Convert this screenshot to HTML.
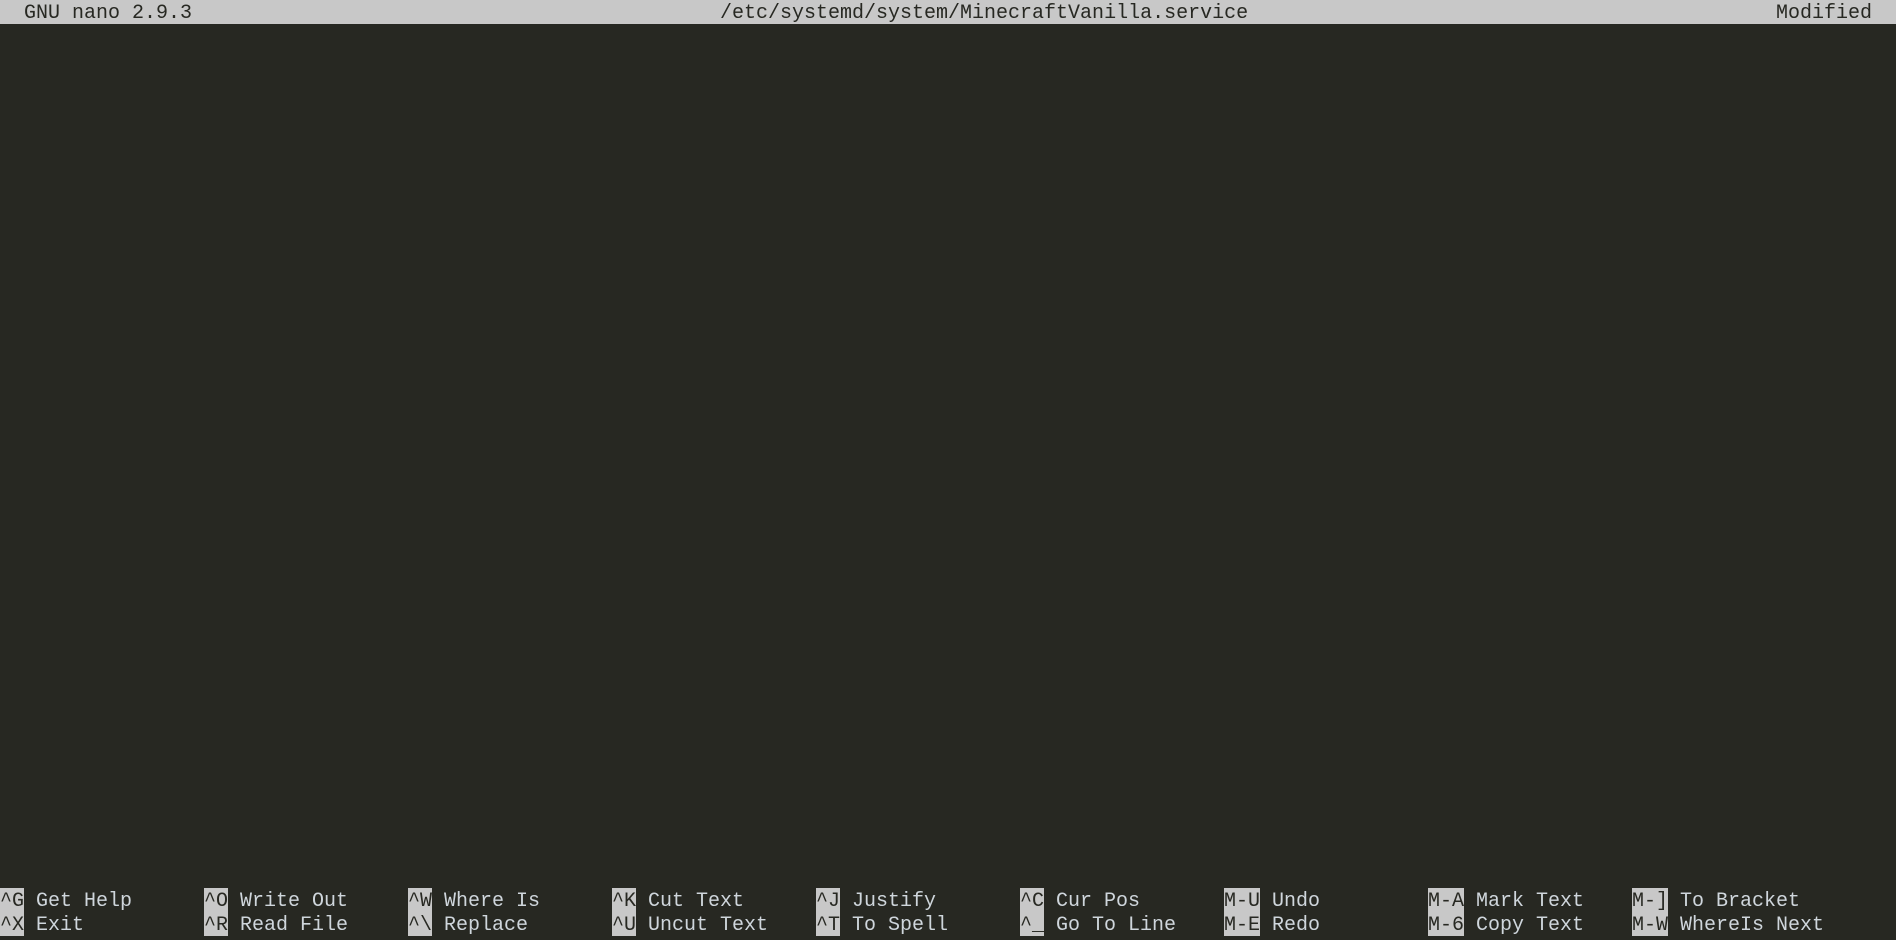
<!DOCTYPE html>
<html><head><meta charset="utf-8"><style>
html,body{margin:0;padding:0;background:#272822;width:1896px;height:936px;overflow:hidden}
.t{position:absolute;font-family:"Liberation Mono",monospace;font-size:20px;line-height:28px;height:24px;white-space:pre;color:#cfd6dc}
.bar{position:absolute;left:0;top:0;width:1896px;height:24px;background:#c8c8c8}
.bar .t{color:#272822}
.k{display:inline-block;vertical-align:top;height:24px;line-height:28px;overflow:hidden;background:#c8c8c8;color:#272822}
</style></head><body>
<div class="bar">
<div class="t" style="left:24px;top:0">GNU nano 2.9.3</div>
<div class="t" style="left:720px;top:0">/etc/systemd/system/MinecraftVanilla.service</div>
<div class="t" style="left:1776px;top:0">Modified</div>
</div>
<div class="t" style="left:0;top:888px"><span class="k">^G</span> Get Help</div>
<div class="t" style="left:0;top:912px"><span class="k">^X</span> Exit</div>
<div class="t" style="left:204px;top:888px"><span class="k">^O</span> Write Out</div>
<div class="t" style="left:204px;top:912px"><span class="k">^R</span> Read File</div>
<div class="t" style="left:408px;top:888px"><span class="k">^W</span> Where Is</div>
<div class="t" style="left:408px;top:912px"><span class="k">^\</span> Replace</div>
<div class="t" style="left:612px;top:888px"><span class="k">^K</span> Cut Text</div>
<div class="t" style="left:612px;top:912px"><span class="k">^U</span> Uncut Text</div>
<div class="t" style="left:816px;top:888px"><span class="k">^J</span> Justify</div>
<div class="t" style="left:816px;top:912px"><span class="k">^T</span> To Spell</div>
<div class="t" style="left:1020px;top:888px"><span class="k">^C</span> Cur Pos</div>
<div class="t" style="left:1020px;top:912px"><span class="k">^_</span> Go To Line</div>
<div class="t" style="left:1224px;top:888px"><span class="k">M-U</span> Undo</div>
<div class="t" style="left:1224px;top:912px"><span class="k">M-E</span> Redo</div>
<div class="t" style="left:1428px;top:888px"><span class="k">M-A</span> Mark Text</div>
<div class="t" style="left:1428px;top:912px"><span class="k">M-6</span> Copy Text</div>
<div class="t" style="left:1632px;top:888px"><span class="k">M-]</span> To Bracket</div>
<div class="t" style="left:1632px;top:912px"><span class="k">M-W</span> WhereIs Next</div>
</body></html>
